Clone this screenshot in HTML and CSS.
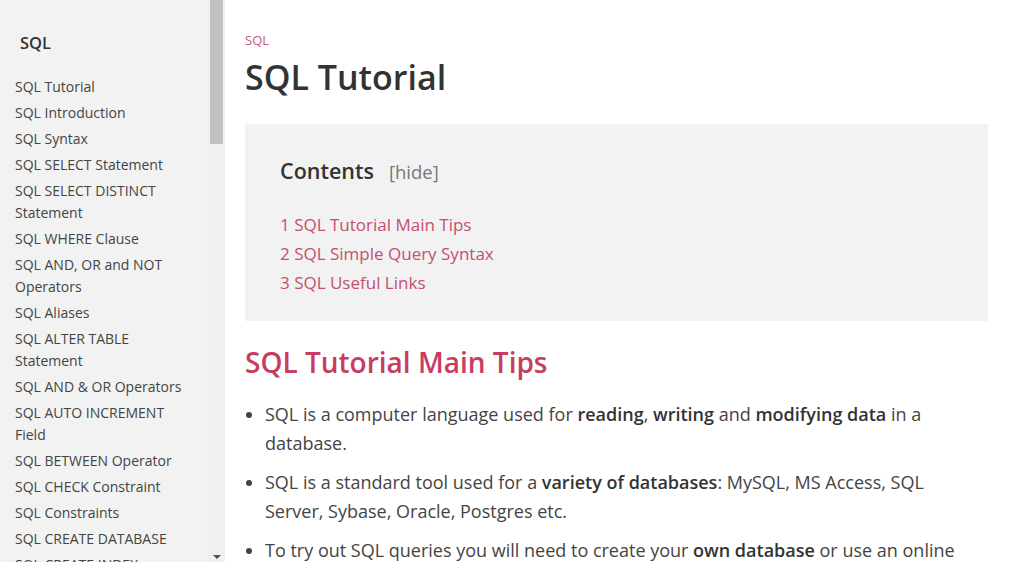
FILE: index.html
```html
<!DOCTYPE html>
<html lang="en">
<head>
<meta charset="utf-8">
<title>SQL Tutorial</title>
<link rel="stylesheet" href="styles.css">
</head>
<body>
<aside class="sidebar">
  <div class="side-inner">
    <div class="side-title">SQL</div>
    <ul class="side-list">
      <li>SQL Tutorial</li>
      <li>SQL Introduction</li>
      <li>SQL Syntax</li>
      <li>SQL SELECT Statement</li>
      <li>SQL SELECT DISTINCT Statement</li>
      <li>SQL WHERE Clause</li>
      <li>SQL AND, OR and NOT Operators</li>
      <li>SQL Aliases</li>
      <li>SQL ALTER TABLE Statement</li>
      <li>SQL AND &amp; OR Operators</li>
      <li>SQL AUTO INCREMENT Field</li>
      <li>SQL BETWEEN Operator</li>
      <li>SQL CHECK Constraint</li>
      <li>SQL Constraints</li>
      <li>SQL CREATE DATABASE</li>
      <li>SQL CREATE INDEX</li>
    </ul>
  </div>
  <div class="scrollbar">
    <div class="thumb"></div>
    <div class="track-space"></div>
    <div class="arrow"></div>
  </div>
</aside>
<main class="main">
  <div class="crumb">SQL</div>
  <h1 class="title">SQL Tutorial</h1>
  <div class="toc">
    <div class="toc-head"><span class="toc-title">Contents</span><span class="toc-hide">[hide]</span></div>
    <ul class="toc-list">
      <li>1 SQL Tutorial Main Tips</li>
      <li>2 SQL Simple Query Syntax</li>
      <li>3 SQL Useful Links</li>
    </ul>
  </div>
  <h2 class="section">SQL Tutorial Main Tips</h2>
  <ul class="tips">
    <li>SQL is a computer language used for <b>reading</b>, <b>writing</b> and <b>modifying data</b> in a database.</li>
    <li>SQL is a standard tool used for a <b>variety of databases</b>: MySQL, MS Access, SQL Server, Sybase, Oracle, Postgres etc.</li>
    <li>To try out SQL queries you will need to create your <b>own database</b> or use an online tool.</li>
  </ul>
</main>
</body>
</html>
```
FILE: styles.css
```css
html, body {
  margin: 0;
  padding: 0;
  height: 562px;
  overflow: hidden;
  background: #ffffff;
  font-family: "Open Sans", "Noto Sans", sans-serif;
}
body {
  display: flex;
  align-items: flex-start;
}
.sidebar {
  width: 225px;
  flex: 0 0 225px;
  height: 562px;
  overflow: hidden;
  background: #f2f2f2;
  display: flex;
}
.side-inner {
  width: 180px;
  padding: 30px 13px 0 15px;
}
.side-title {
  font-size: 16.5px;
  font-weight: 600;
  line-height: 26px;
  color: #333;
  padding-left: 5px;
  margin-bottom: 18px;
}
.side-list {
  list-style: none;
  margin: 0;
  padding: 0;
}
.side-list li {
  font-size: 14px;
  line-height: 22px;
  padding: 2px 0;
  color: #444;
}
.scrollbar {
  width: 17px;
  flex: 0 0 17px;
  background: #f1f1f1;
  display: flex;
  flex-direction: column;
  align-items: center;
  height: 562px;
}
.thumb {
  width: 13px;
  height: 144px;
  background: #c1c1c1;
}
.track-space {
  flex: 1;
}
.arrow {
  width: 0;
  height: 0;
  border-left: 4px solid transparent;
  border-right: 4px solid transparent;
  border-top: 4px solid #505050;
  margin-bottom: 3px;
}
.main {
  flex: 1;
  padding: 31px 21px 0 20px;
  color: #444;
  height: 531px;
  overflow: hidden;
}
.crumb {
  font-size: 13px;
  line-height: 18px;
  color: #c4587a;
}
.title {
  margin: 8px 0 0;
  font-size: 34px;
  line-height: 40px;
  font-weight: 600;
  color: #333;
}
.toc {
  margin-top: 27px;
  background: #f2f2f2;
  padding: 33px 35px 24px;
}
.toc-head {
  display: flex;
  align-items: baseline;
  gap: 15px;
  line-height: 28px;
}
.toc-title {
  font-size: 21.5px;
  font-weight: 600;
  color: #333;
}
.toc-hide {
  font-size: 18.5px;
  color: #777;
}
.toc-list {
  list-style: none;
  margin: 24px 0 0;
  padding: 0;
}
.toc-list li {
  font-size: 17px;
  line-height: 29px;
  color: #c4506f;
}
.section {
  margin: 23px 0 0;
  font-size: 28px;
  line-height: 36px;
  font-weight: 600;
  color: #c73d61;
}
.tips {
  margin: 20px 0 0;
  padding: 0 25px 0 20px;
}
.tips li {
  font-size: 18px;
  line-height: 29px;
  margin-bottom: 10px;
  color: #444;
}
.tips b {
  font-weight: 600;
  color: #333;
}
```
